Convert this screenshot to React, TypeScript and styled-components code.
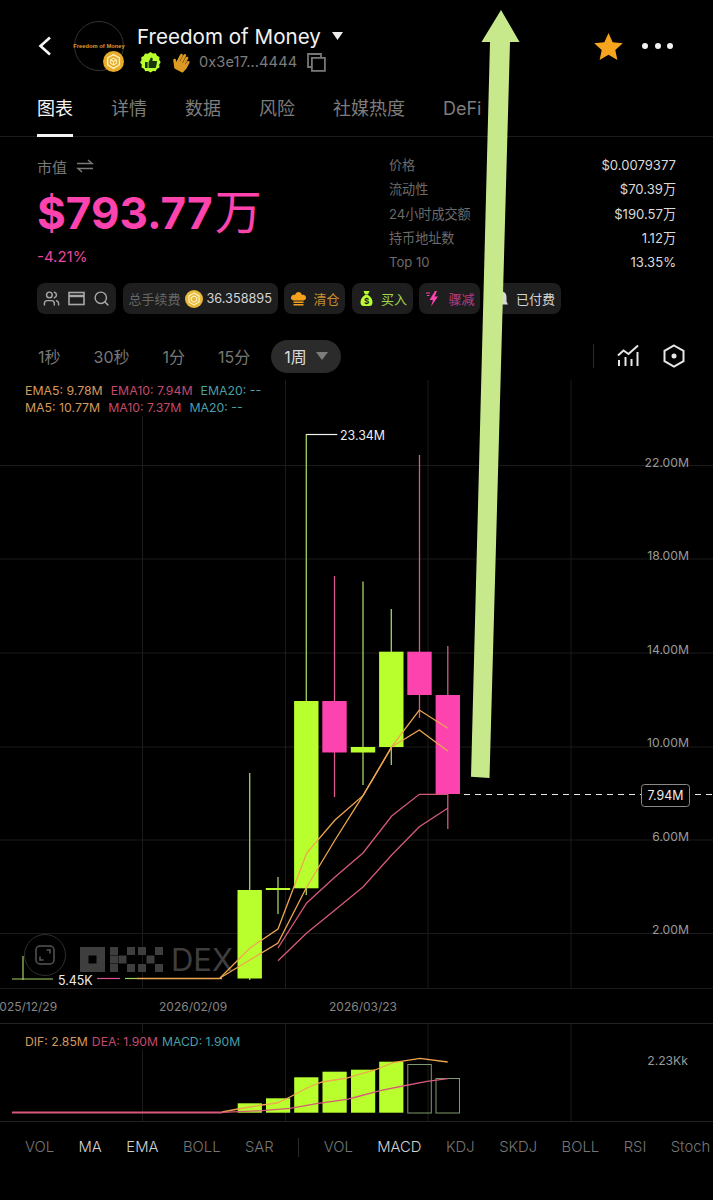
import * as React from 'react';
import styled, { createGlobalStyle } from 'styled-components';
import { FaHandPaper } from 'react-icons/fa';
import { Search, Users } from 'lucide-react';

const LIME = '#b9ff2e';
const PINK = '#fd43ae';
const WICK_LIME = '#a3d162';
const WICK_PINK = '#d9578f';
const ORANGE = '#eea64f';
const ROSE = '#d65a78';
const GRID = '#1b1b1b';

const GlobalStyle = createGlobalStyle`
  html, body {
    margin: 0;
    padding: 0;
    background: #000;
  }

  * {
    box-sizing: border-box;
  }
`;

const Page = styled.div`
  position: relative;
  width: 713px;
  height: 1200px;
  overflow: hidden;
  background: #000;
  color: #fff;
  font-family: Inter, 'Noto Sans CJK SC', sans-serif;
`;

const Header = styled.header`
  display: flex;
  align-items: center;
  height: 88px;
  padding: 4px 0 0 37px;
`;

const BackIcon = styled.svg`
  width: 16px;
  height: 20px;
  margin-right: 21px;
`;

const Avatar = styled.div`
  position: relative;
  display: flex;
  align-items: center;
  justify-content: center;
  width: 50px;
  height: 50px;
  margin-right: 13px;
  border: 1px solid #333;
  border-radius: 50%;
  color: #dd9a2b;
  font-family: 'Liberation Sans', sans-serif;
  font-size: 5.8px;
  font-weight: 700;
  white-space: nowrap;
`;

const AvatarBadge = styled.svg`
  position: absolute;
  right: -1px;
  bottom: -2px;
  width: 21px;
  height: 21px;
`;

const TokenInfo = styled.div`
  display: flex;
  flex: 1;
  flex-direction: column;
`;

const TokenName = styled.div`
  display: flex;
  align-items: center;
  height: 32px;
  font-size: 20.6px;
  color: #f2f2f2;
`;

const Caret = styled.svg`
  width: 11px;
  height: 8px;
  margin-left: 11px;
`;

const TokenMeta = styled.div`
  display: flex;
  align-items: center;
  height: 20px;
  margin-left: 3px;
`;

const HandBadge = styled(FaHandPaper)`
  margin-left: 11px;
  margin-right: 9px;
  color: #dd9a22;
  font-size: 18px;
  transform: rotate(28deg);
`;

const Address = styled.span`
  color: #7c7c7c;
  font-size: 14.6px;
  letter-spacing: 0.1px;
`;

const CopyIcon = styled.svg`
  width: 19px;
  height: 19px;
  margin-left: 10px;
`;

const HeaderActions = styled.div`
  display: flex;
  align-items: center;
  gap: 19px;
  padding-right: 40px;
`;

const More = styled.div`
  display: flex;
  gap: 6.5px;

  span {
    width: 6px;
    height: 6px;
    border-radius: 50%;
    background: #f2f2f2;
  }
`;

const Tabs = styled.nav`
  display: flex;
  align-items: flex-start;
  gap: 38px;
  height: 49px;
  padding: 8px 0 0 37px;
  border-bottom: 1px solid #1c1c1c;
`;

const Tab = styled.div<{ $active?: boolean }>`
  position: relative;
  height: 41px;
  color: ${(p) => (p.$active ? '#f4f4f4' : '#7d7d7d')};
  font-size: 18px;
  line-height: 26px;

  &::after {
    content: '';
    display: ${(p) => (p.$active ? 'block' : 'none')};
    position: absolute;
    left: 0;
    right: 0;
    bottom: 0;
    height: 3px;
    background: #f4f4f4;
  }
`;

const Summary = styled.section`
  display: flex;
  justify-content: space-between;
  height: 146px;
  padding: 0 37px;
`;

const MarketCap = styled.div`
  display: flex;
  flex-direction: column;
  padding-top: 19px;
`;

const CapLabel = styled.div`
  display: flex;
  align-items: center;
  gap: 9px;
  height: 20px;
  color: #7a7a7a;
  font-size: 15px;
`;

const CapValue = styled.div`
  display: flex;
  align-items: baseline;
  height: 60px;
  margin-top: 6px;
  color: ${PINK};
  font-size: 44px;
  font-weight: 700;
  line-height: 60px;

  span {
    margin-left: 2px;
    font-size: 47px;
    font-weight: 400;
  }
`;

const CapChange = styled.div`
  margin-top: 5px;
  color: #e8479f;
  font-size: 15px;
  line-height: 20px;
`;

const StatsTable = styled.dl`
  display: grid;
  grid-template-columns: 1fr auto;
  grid-auto-rows: 24.3px;
  align-items: center;
  width: 287px;
  margin: 15.5px 0 0;
  font-size: 13.1px;
`;

const StatLabel = styled.dt`
  color: #6c6c6c;
`;

const StatValue = styled.dd`
  margin: 0;
  color: #dadada;
  text-align: right;
`;

const ChipRow = styled.div`
  display: flex;
  gap: 6.5px;
  height: 31px;
  padding-left: 37px;
`;

const Chip = styled.div<{ $color?: string; $gap?: number }>`
  display: flex;
  align-items: center;
  gap: ${(p) => p.$gap ?? 6}px;
  padding: 0 6px;
  border-radius: 8px;
  background: #1e1e1e;
  color: ${(p) => p.$color ?? '#d4d4d4'};
  font-size: 13px;
  white-space: nowrap;
`;

const ChipMuted = styled.span`
  color: #666;
`;

const ChipValue = styled.span`
  font-size: 12.7px;
`;

const ChipIcon = styled.svg`
  flex: none;
  width: 17px;
  height: 17px;
`;

const Timeframes = styled.div`
  display: flex;
  align-items: center;
  height: 66px;
  padding: 18px 27px 0 38px;
  color: #777;
  font-size: 16px;
`;

const Frame = styled.span`
  margin-right: 33px;
`;

const ActiveFrame = styled.div`
  display: flex;
  align-items: center;
  gap: 9px;
  height: 33px;
  margin-left: -12px;
  padding: 0 13px;
  border-radius: 17px;
  background: #2b2b2b;
  color: #dcdcdc;
`;

const ToolBar = styled.div`
  display: flex;
  align-items: center;
  gap: 22px;
  margin-left: auto;

  i {
    width: 1px;
    height: 24px;
    background: #2a2a2a;
  }
`;

const ToolIcon = styled.svg`
  width: 24px;
  height: 24px;
`;

const ChartPanel = styled.section`
  position: relative;
  height: 643px;
`;

const ChartCanvas = styled.svg`
  display: block;
  width: 713px;
  height: 643px;
`;

const Legend = styled.div`
  position: absolute;
  top: 2px;
  left: 25px;
  display: flex;
  flex-direction: column;
  background: #000;
  font-size: 12.3px;
  line-height: 17px;
`;

const LegendRow = styled.div`
  display: flex;
  gap: 8px;
`;

const LegendItem = styled.span<{ $color: string }>`
  color: ${(p) => p.$color};
`;

const PriceLabel = styled.text`
  fill: #9a9a9a;
  font-size: 12.2px;
  text-anchor: end;
`;

const DateLabel = styled.text`
  fill: #858585;
  font-size: 12px;
`;

const MarkerLabel = styled.text`
  fill: #ededed;
  font-size: 12.4px;
`;

const Watermark = styled.text`
  fill: #3e3e3e;
  font-size: 31px;
`;

const RecenterButton = styled.div`
  position: absolute;
  top: 554px;
  left: 24px;
  display: flex;
  align-items: center;
  justify-content: center;
  width: 42px;
  height: 42px;
  border: 1px solid #2e2e2e;
  border-radius: 50%;
`;

const MacdPanel = styled.section`
  position: relative;
  height: 99px;
  border-top: 1px solid #222;
  border-bottom: 1px solid #222;
`;

const MacdCanvas = styled.svg`
  display: block;
  width: 713px;
  height: 97px;
`;

const MacdLegend = styled(Legend)`
  top: 9px;
  font-size: 12.2px;
`;

const MacdLegendRow = styled(LegendRow)`
  gap: 4px;
`;

const IndicatorBar = styled.div`
  display: flex;
  align-items: center;
  gap: 24.5px;
  height: 50px;
  padding-left: 25px;
  overflow: hidden;
  font-size: 14.8px;
  font-weight: 300;
`;

const Indicator = styled.span<{ $active?: boolean }>`
  flex: none;
  color: ${(p) => (p.$active ? '#d2d2d2' : '#777')};
`;

const IndicatorDivider = styled.i`
  flex: none;
  width: 1px;
  height: 19px;
  background: #2a2a2a;
`;

const TrendArrow = styled.svg`
  position: absolute;
  top: 0;
  left: 0;
  width: 713px;
  height: 800px;
  pointer-events: none;
`;

type Candle = {
  x: number;
  top: number;
  bottom: number;
  high: number;
  low: number;
  up: boolean;
};

const CANDLES: Candle[] = [
  { x: 249.7, top: 890, bottom: 978.5, high: 773, low: 980, up: true },
  { x: 278, top: 888, bottom: 890, high: 877, low: 914, up: true },
  { x: 306.3, top: 701, bottom: 888.3, high: 434, low: 895, up: true },
  { x: 334.5, top: 701, bottom: 752.5, high: 576, low: 797, up: false },
  { x: 363, top: 747, bottom: 752.5, high: 581.5, low: 785, up: true },
  { x: 391.3, top: 651.7, bottom: 747, high: 609, low: 765, up: true },
  { x: 419.5, top: 651.7, bottom: 695, high: 455, low: 718, up: false },
  { x: 447.8, top: 695, bottom: 794, high: 646, low: 829, up: false },
];

const PRICE_LINES = [
  { color: ORANGE, points: '220,978 250,948 278,929 306.7,853 335,820 363,795.7 391.7,746.7 419.3,710 447.7,728.3' },
  { color: ORANGE, points: '220,978 278,943 306.7,887 335,840 363,795.7 391.7,747 419.3,730 447.7,751' },
  { color: ROSE, points: '278,948 306.7,903 335,877 363,853 391.7,816 419.3,794.3 447.7,794.3' },
  { color: ROSE, points: '278,960.7 306.7,933 335,910 363,887 391.7,855 419.3,826.7 447.7,808.3' },
];

const PRICE_TICKS = [
  { label: '22.00M', y: 467 },
  { label: '18.00M', y: 560 },
  { label: '14.00M', y: 654 },
  { label: '10.00M', y: 747 },
  { label: '6.00M', y: 841 },
  { label: '2.00M', y: 934 },
];

const GRID_X = [142.5, 285.5, 428, 571];
const GRID_Y = [465.5, 559, 653, 747, 840, 933.5, 988.5];

const DATES = [
  { label: '2025/12/29', x: -8 },
  { label: '2026/02/09', x: 159 },
  { label: '2026/03/23', x: 329 },
];

const MACD_BARS = [
  { x: 237.7, top: 1103.3 },
  { x: 266, top: 1098.3 },
  { x: 294.2, top: 1077.3 },
  { x: 322.5, top: 1071.7 },
  { x: 351, top: 1069.7 },
  { x: 379.2, top: 1061.7 },
];

const OKX_BLOCKS = [
  [80, 947, 25, 25],
  [110, 947, 8, 8],
  [110, 955.5, 8, 8],
  [110, 964, 8, 8],
  [118.5, 955.5, 8, 8],
  [127, 947, 8, 8],
  [127, 964, 8, 8],
  [138, 947, 8, 8],
  [138, 964, 8, 8],
  [146.5, 955.5, 8, 8],
  [155, 947, 8, 8],
  [155, 964, 8, 8],
];

const CoinIcon = ({ size }: { size: number }) => (
  <svg width={size} height={size} viewBox="0 0 20 20" style={{ flex: 'none' }}>
    <circle cx="10" cy="10" r="10" fill="#e8b93a" />
    <path d="M10 3.4l5.6 3.2v6.6L10 16.6l-5.6-3.4V6.6z" fill="none" stroke="#fff3c4" strokeWidth="1.3" />
    <path d="M10 6.6l3 1.7v3.4L10 13.5l-3-1.8V8.3z" fill="none" stroke="#fff3c4" strokeWidth="1.2" />
  </svg>
);

const App = () => {
  return (
    <Page>
      <GlobalStyle />

      <Header>
        <BackIcon viewBox="0 0 16 20">
          <path d="M13 1.5L3.5 10l9.5 8.5" fill="none" stroke="#f5f5f5" strokeWidth="2.6" />
        </BackIcon>
        <Avatar>
          Freedom of Money
          <AvatarBadge viewBox="0 0 20 20">
            <circle cx="10" cy="10" r="10" fill="#e8ab2a" />
            <path d="M10 3.4l5.6 3.2v6.6L10 16.6l-5.6-3.4V6.6z" fill="none" stroke="#fff0b8" strokeWidth="1.3" />
            <path d="M10 6.8l2.8 1.6v3.2L10 13.2l-2.8-1.6V8.4zM10 10v3.2M10 10l2.8-1.6M10 10L7.2 8.4" fill="none" stroke="#fff0b8" strokeWidth="1" />
          </AvatarBadge>
        </Avatar>
        <TokenInfo>
          <TokenName>
            Freedom of Money
            <Caret viewBox="0 0 11 8">
              <path d="M0 0h11L5.5 8z" fill="#eee" />
            </Caret>
          </TokenName>
          <TokenMeta>
            <svg width="21" height="21" viewBox="0 0 21 21">
              <path
                d="M10.5 0l2.4 1.5 2.8-.3 1.3 2.5 2.5 1.3-.3 2.8 1.5 2.4-1.5 2.4.3 2.8-2.5 1.3-1.3 2.5-2.8-.3-2.4 1.5-2.4-1.5-2.8.3-1.3-2.5-2.5-1.3.3-2.8L0 10.5l1.5-2.4-.3-2.8 2.5-1.3 1.3-2.5 2.8.3z"
                fill={LIME}
              />
              <path
                d="M5 10h2.6v6H5zM8.6 10l2.4-4.6c1.2 0 1.9.8 1.7 2L12.4 9H16c.7 0 1.1.6 1 1.2l-1 4.8c-.1.6-.6 1-1.2 1H8.6z"
                fill="#17330a"
              />
            </svg>
            <HandBadge />
            <Address>0x3e17...4444</Address>
            <CopyIcon viewBox="0 0 19 19">
              <path d="M4 14H1V1h13v3" fill="none" stroke="#767676" strokeWidth="1.8" />
              <rect x="4.9" y="4.9" width="13" height="13" fill="none" stroke="#767676" strokeWidth="1.8" />
            </CopyIcon>
          </TokenMeta>
        </TokenInfo>
        <HeaderActions>
          <svg width="29" height="29" viewBox="0 0 32 30">
            <path d="M16 0l4.6 10.2 11.2 1.2-8.3 7.4 2.3 11L16 24.2 6.2 29.8l2.3-11L.2 11.4l11.2-1.2z" fill="#f7a51e" />
          </svg>
          <More>
            <span />
            <span />
            <span />
          </More>
        </HeaderActions>
      </Header>

      <Tabs>
        <Tab $active>图表</Tab>
        <Tab>详情</Tab>
        <Tab>数据</Tab>
        <Tab>风险</Tab>
        <Tab>社媒热度</Tab>
        <Tab>DeFi</Tab>
      </Tabs>

      <Summary>
        <MarketCap>
          <CapLabel>
            市值
            <svg width="18" height="14" viewBox="0 0 18 14">
              <path d="M1 4.5h15L12 1M17 9.5H2L6 13" fill="none" stroke="#7a7a7a" strokeWidth="1.5" />
            </svg>
          </CapLabel>
          <CapValue>
            $793.77<span>万</span>
          </CapValue>
          <CapChange>-4.21%</CapChange>
        </MarketCap>
        <StatsTable>
          <StatLabel>价格</StatLabel>
          <StatValue>$0.0079377</StatValue>
          <StatLabel>流动性</StatLabel>
          <StatValue>$70.39万</StatValue>
          <StatLabel>24小时成交额</StatLabel>
          <StatValue>$190.57万</StatValue>
          <StatLabel>持币地址数</StatLabel>
          <StatValue>1.12万</StatValue>
          <StatLabel>Top 10</StatLabel>
          <StatValue>13.35%</StatValue>
        </StatsTable>
      </Summary>

      <ChipRow>
        <Chip $gap={8}>
          <Users size={17} color="#a8a8a8" strokeWidth={2} />
          <ChipIcon viewBox="0 0 17 17">
            <rect x="1" y="2.5" width="15" height="12" fill="none" stroke="#a8a8a8" strokeWidth="1.6" />
            <path d="M1 6h15" stroke="#a8a8a8" strokeWidth="2.4" />
          </ChipIcon>
          <Search size={17} color="#a8a8a8" strokeWidth={2} />
        </Chip>
        <Chip $gap={4}>
          <ChipMuted>总手续费</ChipMuted>
          <CoinIcon size={18} />
          <ChipValue>36.358895</ChipValue>
        </Chip>
        <Chip $color="#c88f2e">
          <ChipIcon viewBox="0 0 17 17">
            <path
              d="M3.5 10.5C1 10 .3 7.6 1.6 6 2.5 4.8 4 4.6 5 5 5.7 3.2 7 2 8.5 2s2.8 1.2 3.5 3c1-.4 2.5-.2 3.4 1 1.3 1.6.6 4-1.9 4.5z"
              fill="#f4a21e"
            />
            <path d="M3.5 11.5h10V13h-10zM3.5 14h10v1.5h-10z" fill="#f4a21e" />
          </ChipIcon>
          清仓
        </Chip>
        <Chip $color="#a3d84a">
          <ChipIcon viewBox="0 0 17 17">
            <path d="M5.5 1h6L10 4.5H7zM7 5h3c3 1.5 4.5 4.5 4.5 7.5 0 2.5-1.5 3.5-3 3.5h-6c-1.5 0-3-1-3-3.5C2.5 9.5 4 6.5 7 5z" fill={LIME} />
            <text x="8.5" y="13.5" fontSize="8" fontWeight="700" textAnchor="middle" fill="#1e1e1e">
              $
            </text>
          </ChipIcon>
          买入
        </Chip>
        <Chip $color="#b93d85">
          <ChipIcon viewBox="0 0 17 17">
            <path d="M10 1L4.5 10H8l-2 6.5L13 6.5H9.5L12 1z" fill={PINK} />
            <path d="M1 3h4M2 5.5h2.5" stroke={PINK} strokeWidth="1.2" />
          </ChipIcon>
          骤减
        </Chip>
        <Chip>
          <ChipIcon viewBox="0 0 17 17">
            <path d="M8.5 1.5c3.5 0 5 2.5 5 5.5v4.5l1.5 3H2l1.5-3V7c0-3 1.5-5.5 5-5.5z" fill="#d8d8d8" />
          </ChipIcon>
          已付费
        </Chip>
      </ChipRow>

      <Timeframes>
        <Frame>1秒</Frame>
        <Frame>30秒</Frame>
        <Frame>1分</Frame>
        <Frame>15分</Frame>
        <ActiveFrame>
          1周
          <svg width="12" height="8" viewBox="0 0 12 8">
            <path d="M0 0h12L6 8z" fill="#7d7d7d" />
          </svg>
        </ActiveFrame>
        <ToolBar>
          <i />
          <ToolIcon viewBox="0 0 24 24">
            <path d="M2 11.5l5.5-5 5 3.5L22 1.5" fill="none" stroke="#e6e6e6" strokeWidth="2" />
            <path d="M3 16v6M9.5 13v9M15.5 15v7M21.5 8v14" stroke="#e6e6e6" strokeWidth="2" />
          </ToolIcon>
          <ToolIcon viewBox="0 0 24 24">
            <path d="M12 1.5l9.5 5.3v10.4L12 22.5l-9.5-5.3V6.8z" fill="none" stroke="#e6e6e6" strokeWidth="2" />
            <circle cx="12" cy="12" r="2.5" fill="#e6e6e6" />
          </ToolIcon>
        </ToolBar>
      </Timeframes>

      <ChartPanel>
        <ChartCanvas viewBox="0 380 713 643">
          {GRID_Y.map((y) => (
            <line key={y} x1="0" x2="713" y1={y} y2={y} stroke={GRID} />
          ))}
          {GRID_X.map((x) => (
            <line key={x} x1={x} x2={x} y1="380" y2="989" stroke={GRID} />
          ))}

          {OKX_BLOCKS.map(([x, y, w, h]) => (
            <rect key={`${x}-${y}`} x={x} y={y} width={w} height={h} fill="#3e3e3e" />
          ))}
          <rect x="88.5" y="955.5" width="8" height="8" fill="#000" />
          <Watermark x="171" y="971">
            DEX
          </Watermark>

          {/* first weeks barely move off the baseline */}
          <path d="M23 956v24" stroke={WICK_LIME} strokeWidth="1.2" />
          <path d="M12 979h41" stroke={WICK_LIME} strokeWidth="1.2" />
          <path d="M97 978.5h23" stroke={WICK_PINK} strokeWidth="1.2" />
          <path d="M125 978.5h12" stroke={WICK_LIME} strokeWidth="1.2" />
          <path d="M137 978.5h85" stroke={ORANGE} strokeWidth="1.4" />

          {CANDLES.map((c) => (
            <g key={c.x}>
              <line x1={c.x} x2={c.x} y1={c.high} y2={c.low} stroke={c.up ? WICK_LIME : WICK_PINK} strokeWidth="1.3" />
              <rect x={c.x - 12.2} y={c.top} width="24.4" height={c.bottom - c.top} fill={c.up ? LIME : PINK} />
            </g>
          ))}

          {PRICE_LINES.map((line) => (
            <polyline key={line.points} points={line.points} fill="none" stroke={line.color} strokeWidth="1.3" />
          ))}

          <path d="M306.3 434.5h31" fill="none" stroke="#f2f2f2" strokeWidth="1.2" />
          <MarkerLabel x="340" y="440">
            23.34M
          </MarkerLabel>
          <MarkerLabel x="58" y="985">
            5.45K
          </MarkerLabel>

          {PRICE_TICKS.map((t) => (
            <PriceLabel key={t.label} x="689" y={t.y}>
              {t.label}
            </PriceLabel>
          ))}

          {DATES.map((d) => (
            <DateLabel key={d.label} x={d.x} y="1011">
              {d.label}
            </DateLabel>
          ))}

          <path d="M464 794.5h249" stroke="#e8e8e8" strokeWidth="1.2" strokeDasharray="6 5" />
          <rect x="641.5" y="784.5" width="48" height="22" rx="3" fill="#000" stroke="#8a8a8a" />
          <MarkerLabel x="665.5" y="800" textAnchor="middle">
            7.94M
          </MarkerLabel>
        </ChartCanvas>

        <Legend>
          <LegendRow>
            <LegendItem $color="#d6995c">EMA5: 9.78M</LegendItem>
            <LegendItem $color="#c24a6e">EMA10: 7.94M</LegendItem>
            <LegendItem $color="#4a9fa8">EMA20: --</LegendItem>
          </LegendRow>
          <LegendRow>
            <LegendItem $color="#d6995c">MA5: 10.77M</LegendItem>
            <LegendItem $color="#c24a6e">MA10: 7.37M</LegendItem>
            <LegendItem $color="#4a9fa8">MA20: --</LegendItem>
          </LegendRow>
        </Legend>

        <RecenterButton>
          <svg width="20" height="20" viewBox="0 0 20 20">
            <rect x="1" y="1" width="18" height="18" rx="4" fill="none" stroke="#565656" strokeWidth="1.5" />
            <path d="M5 11.5V15h3.5M15 8.5V5h-3.5" fill="none" stroke="#565656" strokeWidth="1.5" />
          </svg>
        </RecenterButton>
      </ChartPanel>

      <MacdPanel>
        <MacdCanvas viewBox="0 1024 713 97">
          {GRID_X.map((x) => (
            <line key={x} x1={x} x2={x} y1="1024" y2="1121" stroke={GRID} />
          ))}
          <path d="M12 1112.5h210" stroke={ROSE} strokeWidth="1.8" />
          {MACD_BARS.map((b) => (
            <rect key={b.x} x={b.x} y={b.top} width="24.2" height={1112.7 - b.top} fill={LIME} />
          ))}
          <rect x="407.8" y="1064.5" width="23.5" height="48.5" fill="none" stroke="#7d9a68" />
          <rect x="436" y="1078.5" width="23.5" height="34.5" fill="none" stroke="#7d9a68" />
          <polyline
            points="222,1112 238,1109 262,1105 277,1103 290,1097 307,1088 322,1082 347,1078 360,1074 375,1070 393,1062.7 420,1058.3 447.7,1062"
            fill="none"
            stroke={ORANGE}
            strokeWidth="1.3"
          />
          <polyline
            points="222,1112.3 262,1110.7 290,1108.3 318,1103.3 347,1099.3 360,1096 380,1090.7 403,1086 427,1081.3 447.7,1078.7"
            fill="none"
            stroke={ROSE}
            strokeWidth="1.3"
          />
          <PriceLabel x="688" y="1065">
            2.23Kk
          </PriceLabel>
        </MacdCanvas>
        <MacdLegend>
          <MacdLegendRow>
            <LegendItem $color="#d6995c">DIF: 2.85M</LegendItem>
            <LegendItem $color="#c24a6e">DEA: 1.90M</LegendItem>
            <LegendItem $color="#4a9fa8">MACD: 1.90M</LegendItem>
          </MacdLegendRow>
        </MacdLegend>
      </MacdPanel>

      <IndicatorBar>
        <Indicator>VOL</Indicator>
        <Indicator $active>MA</Indicator>
        <Indicator $active>EMA</Indicator>
        <Indicator>BOLL</Indicator>
        <Indicator>SAR</Indicator>
        <IndicatorDivider />
        <Indicator>VOL</Indicator>
        <Indicator $active>MACD</Indicator>
        <Indicator>KDJ</Indicator>
        <Indicator>SKDJ</Indicator>
        <Indicator>BOLL</Indicator>
        <Indicator>RSI</Indicator>
        <Indicator>Stoch</Indicator>
      </IndicatorBar>

      <TrendArrow viewBox="0 0 713 800">
        <path d="M501 10l18.5 32H510L489.5 778 471 776.7 490 42h-8.5z" fill="#c7e98b" />
      </TrendArrow>
    </Page>
  );
};

export default App;
